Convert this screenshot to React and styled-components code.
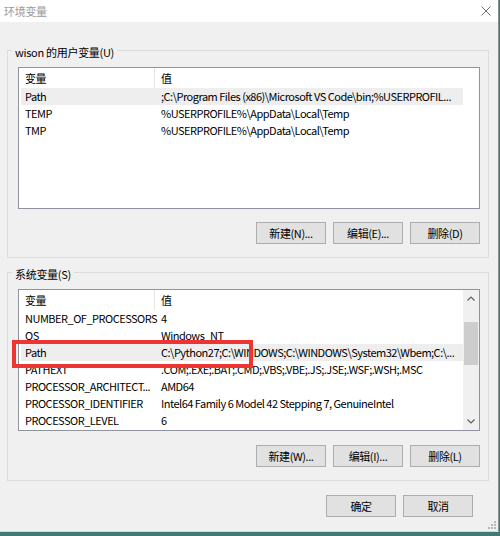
import React from "react";
import styled, { createGlobalStyle } from "styled-components";

const FONT = `"Noto Sans CJK SC", "Noto Sans", sans-serif`;

const GlobalStyle = createGlobalStyle`
  html, body { margin: 0; padding: 0; }
  body {
    width: 500px;
    height: 536px;
    overflow: hidden;
    background: #3f7a78;
    font-family: ${FONT};
    font-size: 11px;
    letter-spacing: -0.5px;
    color: #000;
  }
`;

const Window = styled.div`
  position: relative;
  box-sizing: border-box;
  width: 499px;
  height: 532px;
  background: #f0f0f0;
  border-right: 1px solid #8c8c8c;
  border-bottom: 1px solid #d6d6d6;
  display: flex;
  flex-direction: column;
`;

const TitleBar = styled.div`
  height: 22px;
  flex: none;
  background: #fff;
  display: flex;
  align-items: center;
  justify-content: space-between;
  padding: 0 7px 0 4px;
`;

const Title = styled.span`
  color: #9a9a9a;
  font-size: 11px;
  line-height: 16px;
  letter-spacing: -0.3px;
`;

const Body = styled.div`
  padding: 19px 9px 0 7px;
  display: flex;
  flex-direction: column;
`;

const Group = styled.fieldset`
  margin: ${(p) => (p.$first ? "0" : "5px 0 0")};
  padding: 8px 8px 13px 10px;
  border: 1px solid #dcdcdc;
  min-width: 0;
  display: flex;
  flex-direction: column;
`;

const Legend = styled.legend`
  margin-left: -6px;
  padding: 4px 3px 0;
  line-height: 14px;
  font-size: 11px;
  letter-spacing: -0.3px;
`;

const ListBox = styled.div`
  box-sizing: border-box;
  width: 462px;
  height: 142px;
  border: 1px solid #8f949c;
  background: #fff;
  display: flex;
  overflow: hidden;
`;

const Table = styled.div`
  flex: 1;
  display: flex;
  flex-direction: column;
  min-width: 0;
`;

const Header = styled.div`
  height: 20px;
  display: flex;
  flex: none;
`;

const HeadCell = styled.div`
  box-sizing: border-box;
  width: ${(p) => p.$w || "auto"};
  flex: ${(p) => (p.$w ? "none" : "1")};
  padding-left: 6px;
  display: flex;
  align-items: center;
  border-right: ${(p) => (p.$sep ? "1px solid #e5e5e5" : "none")};
  white-space: nowrap;
`;

const Row = styled.div`
  width: 442px;
  margin-left: 2px;
  height: 17px;
  display: flex;
  align-items: center;
  flex: none;
  background: ${(p) => (p.$sel ? "#eeeeee" : "transparent")};
  white-space: nowrap;
`;

const Cell = styled.div`
  box-sizing: border-box;
  width: ${(p) => p.$w};
  flex: none;
  padding-left: ${(p) => p.$pl};
  overflow: hidden;
  line-height: 17px;
`;

const ScrollBar = styled.div`
  width: 16px;
  flex: none;
  background: #f0f0f0;
  display: flex;
  flex-direction: column;
`;

const ScrollArrow = styled.div`
  height: 17px;
  flex: none;
  display: flex;
  align-items: center;
  justify-content: center;
`;

const Track = styled.div`
  flex: 1;
  display: flex;
  flex-direction: column;
`;

const Thumb = styled.div`
  margin: 15px 1px 0 1px;
  height: 43px;
  background: #cdcdcd;
`;

const ButtonRow = styled.div`
  display: flex;
  justify-content: flex-end;
  gap: 7px;
  margin-top: ${(p) => p.$mt || "13px"};
  padding-right: ${(p) => p.$pr || "0"};
`;

const Button = styled.button`
  box-sizing: border-box;
  width: 70px;
  height: 22px;
  margin: 0;
  padding: 0;
  background: #e1e1e1;
  border: 1px solid #adadad;
  border-radius: 0;
  font-family: ${FONT};
  font-size: 11px;
  letter-spacing: -0.4px;
  color: #000;
`;

const RedMark = styled.div`
  position: absolute;
  left: 12px;
  top: 340px;
  width: 241px;
  height: 28px;
  box-sizing: border-box;
  border: 4px solid #ef3434;
  pointer-events: none;
`;

const Grip = styled.svg`
  position: absolute;
  right: 2px;
  bottom: 2px;
`;

const Chevron = ({ up }) => (
  <svg width="8" height="5" viewBox="0 0 8 5">
    <polyline
      points={up ? "0.5,4.5 4,1 7.5,4.5" : "0.5,0.5 4,4 7.5,0.5"}
      fill="none"
      stroke="#606060"
      strokeWidth="1.2"
    />
  </svg>
);

const userVars = [
  ["Path", ";C:\\Program Files (x86)\\Microsoft VS Code\\bin;%USERPROFIL...", true],
  ["TEMP", "%USERPROFILE%\\AppData\\Local\\Temp"],
  ["TMP", "%USERPROFILE%\\AppData\\Local\\Temp"],
];

const sysVars = [
  ["NUMBER_OF_PROCESSORS", "4"],
  ["OS", "Windows_NT"],
  ["Path", "C:\\Python27;C:\\WINDOWS;C:\\WINDOWS\\System32\\Wbem;C:\\...", true],
  ["PATHEXT", ".COM;.EXE;.BAT;.CMD;.VBS;.VBE;.JS;.JSE;.WSF;.WSH;.MSC"],
  ["PROCESSOR_ARCHITECT...", "AMD64"],
  ["PROCESSOR_IDENTIFIER", "Intel64 Family 6 Model 42 Stepping 7, GenuineIntel"],
  ["PROCESSOR_LEVEL", "6"],
];

function VarList({ rows, scroll }) {
  return (
    <ListBox>
      <Table>
        <Header>
          <HeadCell $w="136px" $sep>变量</HeadCell>
          <HeadCell>值</HeadCell>
        </Header>
        {rows.map(([k, v, sel], i) => (
          <Row key={i} $sel={sel}>
            <Cell $w="137px" $pl="4px">{k}</Cell>
            <Cell $w="305px" $pl="3px">{v}</Cell>
          </Row>
        ))}
      </Table>
      {scroll && (
        <ScrollBar>
          <ScrollArrow><Chevron up /></ScrollArrow>
          <Track><Thumb /></Track>
          <ScrollArrow><Chevron /></ScrollArrow>
        </ScrollBar>
      )}
    </ListBox>
  );
}

export default function App() {
  return (
    <>
      <GlobalStyle />
      <Window>
        <TitleBar>
          <Title>环境变量</Title>
          <svg width="10" height="10" viewBox="0 0 10 10">
            <path d="M0.5 0.5 L9.5 9.5 M9.5 0.5 L0.5 9.5" stroke="#707070" strokeWidth="1" />
          </svg>
        </TitleBar>
        <Body>
          <Group $first>
            <Legend>wison 的用户变量(U)</Legend>
            <VarList rows={userVars} />
            <ButtonRow>
              <Button>新建(N)...</Button>
              <Button>编辑(E)...</Button>
              <Button>删除(D)</Button>
            </ButtonRow>
          </Group>
          <Group>
            <Legend>系统变量(S)</Legend>
            <VarList rows={sysVars} scroll />
            <ButtonRow $mt="14px">
              <Button>新建(W)...</Button>
              <Button>编辑(I)...</Button>
              <Button>删除(L)</Button>
            </ButtonRow>
          </Group>
          <ButtonRow $mt="14px" $pr="16px">
            <Button>确定</Button>
            <Button>取消</Button>
          </ButtonRow>
        </Body>
        <RedMark />
        <Grip width="8" height="8" viewBox="0 0 8 8">
          {[[6, 0], [6, 3], [3, 3], [6, 6], [3, 6], [0, 6]].map(([x, y], i) => (
            <rect key={i} x={x} y={y} width="2" height="2" fill="#b8b8b8" />
          ))}
        </Grip>
      </Window>
    </>
  );
}
